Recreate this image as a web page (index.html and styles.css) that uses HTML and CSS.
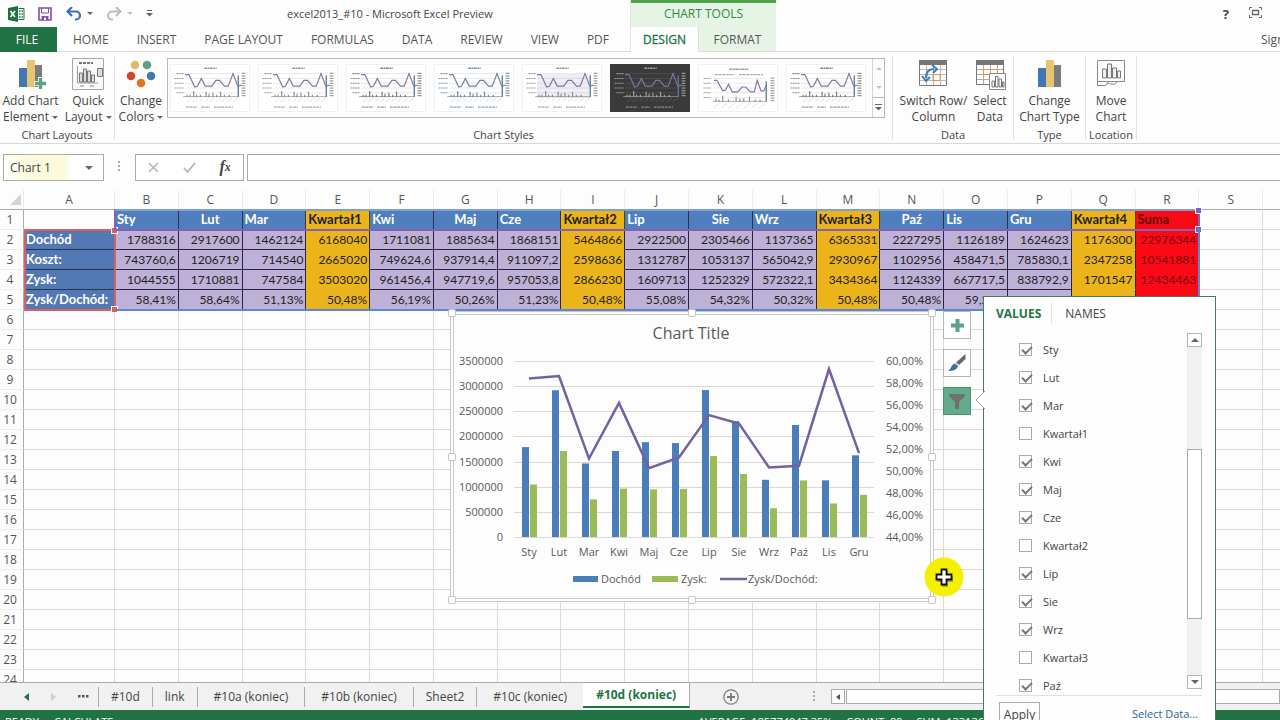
FILE: index.html
```
<!DOCTYPE html>
<html lang="en">
<head>
    <meta charset="UTF-8">
    <meta name="viewport" content="width=device-width, initial-scale=1.0">
    <title>excel2013_#10 - Microsoft Excel Preview</title>
    <link rel="stylesheet" href="styles.css">
</head>
<body>
    <svg class="defs" width="0" height="0" aria-hidden="true">
        <!-- small chart preview used in the styles gallery -->
        <symbol id="thumb" viewBox="0 0 80 48">
            <path d="M34 3.500h13" stroke="currentColor" stroke-width="1.600" stroke-dasharray="3 .6 2 .5" opacity=".6"/>
            <path d="M14 9h54M14 14h54M14 19h54M14 24h54M14 29h54" stroke="currentColor" stroke-width=".5" opacity=".25"/>
            <path d="M5 9h8M3 14h10M3 19h10M3 24h10M5 29h8" stroke="currentColor" stroke-width="1.100" stroke-dasharray="2 .5" opacity=".55"/>
            <path d="M75 8v26" stroke="currentColor" stroke-width="4" stroke-dasharray="1.300 1.300" opacity=".55"/>
            <path d="M12 33h58" stroke="currentColor" stroke-width=".8" opacity=".6"/>
            <path d="M16 33v-2M19 33v-2M23 33v-6M26 33v-2M30 33v-2M36 33v-5M39 33v-3M43 33v-4M47 33v-2M51 33v-5M55 33v-2M60 33v-2" stroke="currentColor" stroke-width="1.200" opacity=".65"/>
            <path d="M69.500 33V11" stroke="#5a7f96" stroke-width="1.400"/>
            <path d="M14 10h4l6 13 3-1 4-8 4 8h7l4-6 4 0 5 6h4l5-13 5 13 4-1" fill="none" stroke="#7b77a6" stroke-width="1.200"/>
            <path d="M16 38l5-3M22 38l5-3M28 38l5-3M34 38l5-3M40 38l5-3M46 38l5-3M52 38l5-3M58 38l5-3M64 38l5-3" stroke="currentColor" stroke-width=".7" stroke-dasharray="1 .8" opacity=".4"/>
            <path d="M15 44h12M31 44h9M44 44h20" stroke="currentColor" stroke-width="1.200" stroke-dasharray="3 .8" opacity=".5"/>
        </symbol>
        <symbol id="thumb-top" viewBox="0 0 80 48">
            <path d="M31 4.500h20" stroke="currentColor" stroke-width="1.600" stroke-dasharray="3 .6 2 .5" opacity=".6"/>
            <path d="M16 10h20M41 10h25" stroke="currentColor" stroke-width="1.200" stroke-dasharray="3 .8" opacity=".5"/>
            <path d="M14 14h54M14 19h54M14 24h54M14 29h54M14 34h54" stroke="currentColor" stroke-width=".5" opacity=".25"/>
            <path d="M4 14h8M4 19h8M4 24h8M4 29h8M4 34h8" stroke="currentColor" stroke-width="1.100" stroke-dasharray="2 .5" opacity=".55"/>
            <path d="M76 13v26" stroke="currentColor" stroke-width="4" stroke-dasharray="1.300 1.300" opacity=".55"/>
            <path d="M14 38h56" stroke="currentColor" stroke-width=".8" opacity=".6"/>
            <path d="M17 38v-3M20 38v-2M24 38v-6M30 38v-2M38 38v-5M42 38v-3M46 38v-3M52 38v-5M58 38v-2M63 38v-2" stroke="currentColor" stroke-width="1.200" opacity=".65"/>
            <path d="M69.500 38V17" stroke="#5a7f96" stroke-width="1.400"/>
            <path d="M15 16h3l6 11 3-1 3-6 4 8h6l4-5 4 0 5 5h4l3-12 4 11 3 0 3-7" fill="none" stroke="#7b77a6" stroke-width="1.200"/>
            <path d="M14 45l7-5M22 45l7-5M30 45l7-5M38 45l7-5M46 45l7-5M54 45l7-5M62 45l7-5" stroke="currentColor" stroke-width=".7" stroke-dasharray="1 .8" opacity=".4"/>
        </symbol>
        <symbol id="columns" viewBox="0 0 32 32">
            <path d="M4 10h8v19H4z" fill="#4277b4"/>
            <path d="M12 2h8v27h-8z" fill="#e8c46f"/>
            <path d="M20 7h7v22h-7z" fill="#7b7b7b"/>
        </symbol>
    </svg>

    <div class="app">
        <header class="top">
            <div class="top-main">
                <div class="titlebar">
                    <svg width="17" height="16" viewBox="0 0 17 16"><path d="M0 2l10-2v16L0 14z" fill="#1e7145"/><path d="M10.500 2.500H16v11h-5.500" fill="#fff" stroke="#1e7145"/><path d="M11 5h1.500M13.500 5H15M11 8h1.500M13.500 8H15M11 11h1.500M13.500 11H15" stroke="#1e7145" stroke-width="1.600"/><path d="M2.500 5l4.500 6M7 5l-4.500 6" stroke="#fff" stroke-width="1.600"/></svg>
                    <button class="qa save" aria-label="Save"><svg width="14" height="14" viewBox="0 0 14 14"><path d="M1 1h12v12H1z" fill="none" stroke="#7f4fa5" stroke-width="1.600"/><path d="M3.500 1v5h7V1" fill="none" stroke="#7f4fa5"/><path d="M3.500 9h7v4h-7z" fill="#7f4fa5"/><path d="M6 10.500h2V13H6z" fill="#fff"/></svg></button>
                    <button class="qa undo" aria-label="Undo"><svg width="16" height="14" viewBox="0 0 16 14"><path d="M2 4.500h8a4 4 0 0 1 0 8H9" fill="none" stroke="#3e6db5" stroke-width="2.200"/><path d="M6 0L1.500 4.500 6 9" fill="none" stroke="#3e6db5" stroke-width="2.200"/></svg><i class="caret"></i></button>
                    <button class="qa redo" aria-label="Redo"><svg width="16" height="14" viewBox="0 0 16 14"><path d="M14 4.500H6a4 4 0 0 0 0 8h1" fill="none" stroke="#bdbdbd" stroke-width="2"/><path d="M10 0l4.500 4.500L10 9" fill="none" stroke="#bdbdbd" stroke-width="2"/></svg><i class="caret light"></i></button>
                    <button class="qa more" aria-label="Customize Quick Access Toolbar"><svg width="7" height="7" viewBox="0 0 7 7"><path d="M1 .5h5" stroke="#666"/><path d="M0 3h7L3.500 6.500z" fill="#666"/></svg></button>
                    <div class="title">excel2013_#10 - Microsoft Excel Preview</div>
                </div>
                <nav class="tabs">
                    <button class="tab file">FILE</button>
                    <button class="tab">HOME</button>
                    <button class="tab">INSERT</button>
                    <button class="tab">PAGE LAYOUT</button>
                    <button class="tab">FORMULAS</button>
                    <button class="tab">DATA</button>
                    <button class="tab">REVIEW</button>
                    <button class="tab">VIEW</button>
                    <button class="tab">PDF</button>
                </nav>
            </div>
            <div class="context">
                <div class="context-title">CHART TOOLS</div>
                <nav class="context-tabs">
                    <button class="tab active">DESIGN</button>
                    <button class="tab">FORMAT</button>
                </nav>
            </div>
            <div class="top-right">
                <div class="window-buttons">
                    <button class="help" aria-label="Help">?</button>
                    <button aria-label="Ribbon display options"><svg width="13" height="11" viewBox="0 0 13 11"><path d="M.5 3V.5H3M10 .5h2.500V3M12.500 8v2.500H10M3 10.500H.5V8" fill="none" stroke="#666"/><path d="M3.500 3.500h6v4h-6z" fill="none" stroke="#666" stroke-width="1.300"/></svg></button>
                    <button aria-label="Minimize"><svg width="9" height="11" viewBox="0 0 9 11"><path d="M0 7h9" stroke="#666" stroke-width="2"/></svg></button>
                </div>
                <a class="signin" href="#">Sign in</a>
            </div>
        </header>

        <section class="ribbon">
            <div class="group layouts">
                <div class="group-body">
                    <button class="big"><svg width="32" height="32" viewBox="0 0 32 32"><use href="#columns"/><path d="M19 25.500h13M25.500 19v13" stroke="#fff" stroke-width="5"/><path d="M20 25.500h11M25.500 20v11" stroke="#5da287" stroke-width="3.400"/></svg><span>Add Chart<br>Element <i class="caret"></i></span></button>
                    <button class="big"><svg width="32" height="32" viewBox="0 0 32 32"><path d="M.5.500h31v31H.5z" fill="#fafafa" stroke="#a6a6a6"/><path d="M7 5h14" stroke="#777" stroke-width="2" stroke-dasharray="3 1"/><path d="M5.500 8v17H26" fill="none" stroke="#999"/><path d="M7.500 15h3v9h-3zM11.500 11h3v13h-3zM15.500 13h3v11h-3zM19.500 17h3v7h-3zM25.500 10.500h5v8h-5z" fill="#ddd" stroke="#777"/><path d="M8 28h4M18 28h4" stroke="#888"/></svg><span>Quick<br>Layout <i class="caret"></i></span></button>
                </div>
                <div class="group-name">Chart Layouts</div>
            </div>
            <div class="group styles">
                <div class="group-body">
                    <button class="big"><svg width="32" height="32" viewBox="0 0 32 32"><circle cx="10" cy="7" r="4.300" fill="#e3ba6c"/><circle cx="22" cy="7" r="4.300" fill="#5da287"/><circle cx="6" cy="18" r="4.300" fill="#d1492e"/><circle cx="26" cy="18" r="4.300" fill="#4277b4"/><circle cx="16" cy="25" r="4.300" fill="#e0731f"/></svg><span>Change<br>Colors <i class="caret"></i></span></button>
                    <div class="gallery">
                        <button class="thumb" aria-label="Style 1"><svg><use href="#thumb"/></svg></button>
                        <button class="thumb" aria-label="Style 2"><svg><use href="#thumb"/></svg></button>
                        <button class="thumb strong" aria-label="Style 3"><svg><use href="#thumb"/></svg></button>
                        <button class="thumb blue" aria-label="Style 4"><svg><use href="#thumb"/></svg></button>
                        <button class="thumb shaded" aria-label="Style 5"><svg><path d="M14 9h54v24H14z" fill="#eeeef4"/><use href="#thumb"/></svg></button>
                        <button class="thumb dark" aria-label="Style 6"><svg><use href="#thumb"/></svg></button>
                        <button class="thumb" aria-label="Style 7"><svg><use href="#thumb-top"/></svg></button>
                        <button class="thumb strong" aria-label="Style 8"><svg><use href="#thumb"/></svg></button>
                        <div class="gallery-nav">
                            <button aria-label="Previous row"><i class="caret up light"></i></button>
                            <button aria-label="Next row"><i class="caret light"></i></button>
                            <button aria-label="More styles"><svg width="7" height="7" viewBox="0 0 7 7"><path d="M0 .5h7" stroke="#666"/><path d="M0 3h7L3.500 6.500z" fill="#666"/></svg></button>
                        </div>
                    </div>
                </div>
                <div class="group-name">Chart Styles</div>
            </div>
            <div class="group data">
                <div class="group-body">
                    <button class="big"><svg width="32" height="32" viewBox="0 0 32 32"><path d="M2.500 4v23.500h27V4" fill="#fff" stroke="#777"/><path d="M3 11.500h26M3 16.500h26M3 22.500h26M9.500 7v20M16.500 7v20M23.500 7v20" stroke="#c4b8ad"/><path d="M16 16.500h7v6h-7z" fill="none" stroke="#e58e45"/><path d="M2 2h28v5H2z" fill="#777"/><path d="M9 20C9 13 13 11 17 11" fill="none" stroke="#3c7fb5" stroke-width="2.200"/><path d="M5 18l4 5 4-4M15 7l5 4-4 4" fill="none" stroke="#3c7fb5" stroke-width="2"/></svg><span>Switch Row/<br>Column</span></button>
                    <button class="big"><svg width="32" height="32" viewBox="0 0 32 32"><path d="M2.500 4v22.500h27V4" fill="#fff" stroke="#777"/><path d="M3 11.500h26M3 16.500h26M3 21.500h26M9.500 7v19M16.500 7v19M23.500 7v19" stroke="#b8a99c"/><path d="M9.500 11.500h14v5h-14z" fill="none" stroke="#e58e45"/><path d="M2 2h28v5H2z" fill="#777"/><path d="M15.500 15.500h16v16h-16z" fill="#fff" stroke="#888"/><path d="M18 23h2.500v6H18zM21.500 18.500H24V29h-2.500zM25 21h2.500v8H25zM28.500 24H30v5h-1.500z" fill="none" stroke="#777"/></svg><span>Select<br>Data</span></button>
                </div>
                <div class="group-name">Data</div>
            </div>
            <div class="group type">
                <div class="group-body">
                    <button class="big"><svg width="32" height="32" viewBox="0 0 32 32"><use href="#columns"/></svg><span>Change<br>Chart Type</span></button>
                </div>
                <div class="group-name">Type</div>
            </div>
            <div class="group location">
                <div class="group-body">
                    <button class="big"><svg width="32" height="32" viewBox="0 0 32 32"><path d="M2.500 2.500h27v21h-27z" fill="#fff" stroke="#888"/><path d="M2.500 23v4.500h8l3-4h8M12 26c3-2 7 3 10-2" fill="none" stroke="#888"/><path d="M7.500 11h4v9h-4zM12.500 6h4v14h-4zM17.500 10h4v10h-4zM22.500 13h3v7h-3z" fill="#eee" stroke="#777"/></svg><span>Move<br>Chart</span></button>
                </div>
                <div class="group-name">Location</div>
            </div>
        </section>

        <section class="formula-bar">
            <div class="name-box">
                <input type="text" value="Chart 1" aria-label="Name Box">
                <button aria-label="Name list"><i class="caret big-caret"></i></button>
            </div>
            <div class="grip"></div>
            <div class="formula-buttons">
                <button aria-label="Cancel"><svg width="11" height="11" viewBox="0 0 11 11"><path d="M1 1l9 9M10 1l-9 9" stroke="#b5b5b5" stroke-width="1.500"/></svg></button>
                <button aria-label="Enter"><svg width="13" height="11" viewBox="0 0 13 11"><path d="M1 6l3.500 4L12 1" fill="none" stroke="#b5b5b5" stroke-width="1.800"/></svg></button>
                <button class="fx" aria-label="Insert Function">f<small>x</small></button>
            </div>
            <input class="formula" type="text" aria-label="Formula Bar">
        </section>

        <main class="sheet">
            <div class="cells">
                <table id="grid"></table>
                <div class="range names"></div>
                <div class="range series"></div>
                <div class="range values"></div>
            </div>

            <div class="chart" id="chart">
                <i class="handle tl"></i><i class="handle tc"></i><i class="handle tr"></i>
                <i class="handle ml"></i><i class="handle mr"></i>
                <i class="handle bl"></i><i class="handle bc"></i><i class="handle br"></i>
            </div>

            <div class="chart-buttons">
                <button aria-label="Chart Elements"><svg width="15" height="15" viewBox="0 0 15 15"><path d="M1 7.500h13M7.500 1v13" stroke="#5da287" stroke-width="4"/></svg></button>
                <button aria-label="Chart Styles"><svg width="20" height="20" viewBox="0 0 20 20"><path d="M18.500 1v5L12 12 9 9.500z" fill="#666"/><path d="M8.500 10l3 2.500" stroke="#ccc" stroke-width="2"/><path d="M7.500 10.500L11 13c-1 4-5 5-10 5 3-1 3-6 6.500-7.500z" fill="#3a6ea5"/></svg></button>
                <button class="on" aria-label="Chart Filters"><svg width="18" height="17" viewBox="0 0 18 17"><path d="M1 1h16v2l-6 6v7H7V9L1 3z" fill="#707070"/></svg></button>
            </div>

            <svg class="pointer" width="40" height="40" viewBox="0 0 40 40"><circle cx="20" cy="20" r="19.500" fill="#f5f000"/><path d="M18 14h6v5h5v6h-5v5h-6v-5h-5v-6h5z" fill="#777" opacity=".6"/><path d="M17.500 12.500h5v5h5v5h-5v5h-5v-5h-5v-5h5z" fill="#fff" stroke="#111" stroke-width="1.800"/></svg>

            <aside class="filter">
                <svg class="filter-arrow" width="10" height="18" viewBox="0 0 10 18"><path d="M10 0L1 9l9 9" fill="#fff" stroke="#999"/></svg>
                <div class="filter-tabs">
                    <button class="active">VALUES</button>
                    <button>NAMES</button>
                </div>
                <div class="filter-body">
                    <div class="filter-list" id="filterList"></div>
                    <div class="scroll">
                        <button aria-label="Scroll up"><i class="caret up big-caret"></i></button>
                        <div class="track"><div class="knob"></div></div>
                        <button aria-label="Scroll down"><i class="caret big-caret"></i></button>
                    </div>
                </div>
                <div class="filter-foot">
                    <button class="apply">Apply</button>
                    <a href="#">Select Data...</a>
                </div>
            </aside>
        </main>

        <nav class="sheet-tabs">
            <div class="sheet-nav">
                <button aria-label="Previous sheet"><svg width="5" height="8" viewBox="0 0 5 8"><path d="M5 0v8L0 4z" fill="#217346"/></svg></button>
                <button aria-label="Next sheet"><svg width="5" height="8" viewBox="0 0 5 8"><path d="M0 0v8l5-4z" fill="#d0d0d0"/></svg></button>
                <button aria-label="More sheets"><svg width="11" height="3" viewBox="0 0 11 3"><path d="M0 0h2.500v2.500H0zM4 0h2.500v2.500H4zM8 0h2.500v2.500H8z" fill="#555"/></svg></button>
            </div>
            <button class="sheet-tab">#10d</button>
            <button class="sheet-tab">link</button>
            <button class="sheet-tab long">#10a (koniec)</button>
            <button class="sheet-tab long">#10b (koniec)</button>
            <button class="sheet-tab">Sheet2</button>
            <button class="sheet-tab long">#10c (koniec)</button>
            <button class="sheet-tab long active">#10d (koniec)</button>
            <button class="add" aria-label="New sheet"><svg width="16" height="16" viewBox="0 0 16 16"><circle cx="8" cy="8" r="7.200" fill="none" stroke="#777" stroke-width="1.200"/><path d="M4 8h8M8 4v8" stroke="#777" stroke-width="1.800"/></svg></button>
            <div class="grip"></div>
            <div class="hscroll">
                <button aria-label="Scroll left"><svg width="4" height="6" viewBox="0 0 4 6"><path d="M4 0v6L0 3z" fill="#555"/></svg></button>
                <div class="hknob"></div>
            </div>
        </nav>

        <footer class="status">
            <span>READY</span>
            <span>CALCULATE</span>
            <div class="summary">
                <span>AVERAGE: 185774047,35%</span>
                <span>COUNT: 89</span>
                <span>SUM: 133136</span>
            </div>
        </footer>
    </div>

    <script src="script.js"></script>
</body>
</html>
```
FILE: styles.css
```
* {
    box-sizing: border-box;
}
body {
    margin: 0;
    overflow: hidden;
    font-family: "Open Sans", "Noto Sans", sans-serif;
    font-size: 12px;
    color: #444;
    background-color: #fdfdfd;
}
button {
    font: inherit;
    color: inherit;
    background: none;
    border: 0;
    padding: 0;
}
input {
    font: inherit;
    color: inherit;
}
svg {
    flex: none;
}
.defs {
    position: absolute;
}
/* the status bar runs a little below the window edge */
.app {
    display: flex;
    flex-direction: column;
    height: calc(100vh + 12px);
}
.caret {
    display: inline-block;
    border: 3px solid transparent;
    border-top-color: #666;
    border-bottom: 0;
    vertical-align: middle;
}
.caret.up {
    border-top: 0;
    border-bottom: 3px solid #666;
}
.caret.big-caret {
    border-left-width: 4px;
    border-right-width: 4px;
    border-top-width: 4px;
}
.caret.up.big-caret {
    border-top-width: 0;
    border-bottom-width: 4px;
}
.caret.light {
    border-top-color: #c4c4c4;
}
.caret.up.light {
    border-bottom-color: #c4c4c4;
}

/* title bar and tabs */
.top {
    display: flex;
    flex: none;
    height: 52px;
}
.top-main {
    width: 631px;
    flex: none;
    border-right: 1px solid #e4e4e4;
}
.titlebar {
    display: flex;
    align-items: center;
    height: 27px;
    padding-left: 8px;
}
.qa {
    display: flex;
    align-items: center;
    gap: 5px;
}
.qa.save {
    margin-left: 13px;
}
.qa.undo {
    margin-left: 14px;
}
.qa.redo {
    margin-left: 13px;
}
.qa.more {
    margin-left: 13px;
}
.title {
    flex: 1;
    padding-left: 134px;
    font-size: 11px;
    white-space: nowrap;
}
.tabs,
.context-tabs {
    display: flex;
    height: 25px;
    border-bottom: 1px solid #dcdcdc;
}
.tab {
    padding: 0 14px;
    font-size: 12px;
    color: #555;
    white-space: nowrap;
}
.tab.file {
    flex: none;
    width: 57px;
    height: 25px;
    padding: 0 3px 0 0;
    margin-right: 2px;
    color: #fff;
    background-color: #217346;
}
.context {
    width: 145px;
    flex: none;
    background-color: #e6f4e6;
    border-top: 3px solid #4ea44c;
}
.context-title {
    height: 24px;
    line-height: 22px;
    text-align: center;
    color: #2e8b3c;
}
.context-tabs .tab {
    flex: 1;
}
.context-tabs .tab.active {
    flex: none;
    width: 68px;
    height: 25px;
    padding: 0;
    background-color: #fdfdfd;
    color: #217346;
    border-right: 1px solid #dcdcdc;
    -webkit-text-stroke: 0.3px #217346;
}
.top-right {
    flex: 1;
    overflow: hidden;
    border-bottom: 1px solid #dcdcdc;
}
.window-buttons {
    display: flex;
    justify-content: flex-end;
    align-items: center;
    gap: 20px;
    height: 27px;
    margin-right: -11px;
}
.help {
    font-size: 13px;
    font-weight: bold;
}
.signin {
    display: block;
    margin-right: -18px;
    line-height: 25px;
    text-align: right;
    color: #555;
    text-decoration: none;
}

/* ribbon */
.ribbon {
    display: flex;
    flex: none;
    height: 92px;
    padding-top: 4px;
    border-bottom: 1px solid #d8d8d8;
}
.group {
    display: flex;
    flex-direction: column;
    flex: none;
    height: 84px;
    border-right: 1px solid #e1e1e1;
}
.group-body {
    display: flex;
    justify-content: center;
    height: 72px;
}
.group-name {
    line-height: 20px;
    font-size: 11px;
    text-align: center;
}
.layouts {
    width: 115px;
}
.styles {
    width: 778px;
}
.data {
    width: 121px;
}
.type {
    width: 72px;
}
.location {
    width: 51px;
}
.big {
    display: flex;
    flex-direction: column;
    align-items: center;
    justify-content: flex-start;
    padding: 2px 3px 0;
    line-height: 16px;
    white-space: nowrap;
}
.big span {
    padding-top: 3px;
}
.styles .group-body {
    justify-content: flex-start;
}
.styles .big {
    width: 52px;
}
.gallery {
    display: flex;
    flex: 1;
    gap: 8px;
    height: 60px;
    margin: 2px 7px 0 0;
    padding-left: 2px;
    border: 1px solid #b8b8b8;
}
.thumb {
    width: 80px;
    height: 48px;
    margin-top: 5px;
    color: #555;
    background-color: #fff;
    border: 1px solid #f0f0f0;
}
.thumb svg {
    display: block;
    width: 100%;
    height: 100%;
}
.thumb.strong {
    color: #333;
}
.thumb.blue {
    color: #26496e;
}
.thumb.dark {
    color: #ddd;
    background-color: #3a3a3a;
    border-color: #3a3a3a;
}
.gallery-nav {
    display: flex;
    flex-direction: column;
    flex: 1;
    margin-left: -2px;
    border-left: 1px solid #d4d4d4;
}
.gallery-nav button {
    display: flex;
    align-items: center;
    justify-content: center;
    flex: 1;
}
.gallery-nav button:last-child {
    border-top: 1px solid #b8b8b8;
}

/* formula bar */
.formula-bar {
    display: flex;
    align-items: center;
    flex: none;
    height: 46px;
    padding-left: 3px;
}
.name-box,
.formula-buttons,
.formula {
    height: 27px;
    background-color: #fff;
    border: 1px solid #ababab;
}
.name-box {
    display: flex;
    width: 101px;
    background-image: linear-gradient(to right, #fff, #fbfbdc 20%, #fbfbdc 60%, #fff 70%);
}
.name-box input {
    width: 70px;
    padding: 0 6px;
    border: 0;
    background: none;
    font-size: 12px;
}
.name-box button {
    flex: 1;
}
.grip {
    width: 2px;
    height: 12px;
    background-image: linear-gradient(#aaa 50%, transparent 50%);
    background-size: 2px 4px;
}
.formula-bar .grip {
    margin: 0 15px 0 14px;
}
.formula-buttons {
    display: flex;
    width: 109px;
    margin-right: 3px;
}
.formula-buttons button {
    display: flex;
    align-items: center;
    justify-content: center;
    flex: 1;
}
.fx {
    font-family: "Liberation Serif", serif;
    font-size: 16px;
    font-style: italic;
    font-weight: bold;
}
.fx small {
    font-size: 12px;
}
.formula {
    flex: 1;
    min-width: 0;
    border-right: 0;
}

/* worksheet */
.sheet {
    position: relative;
    flex: 1;
    min-height: 0;
}
.cells {
    position: relative;
    height: 100%;
    overflow: hidden;
    border-bottom: 1px solid #ababab;
}
#grid {
    width: 1327px;
    table-layout: fixed;
    border-collapse: separate;
    border-spacing: 0;
    font-family: "Lato", sans-serif;
    color: #222;
}
#grid th,
#grid td {
    height: 20px;
    padding: 0 2px;
    line-height: 19px;
    white-space: nowrap;
    border-right: 1px solid #dadada;
    border-bottom: 1px solid #dadada;
}
#grid th {
    padding: 0;
    font-family: "Open Sans", sans-serif;
    font-weight: normal;
    color: #555;
}
#grid thead th {
    border-bottom-color: #ababab;
    border-right-color: #ececec;
}
#grid tbody th {
    padding-right: 3px;
    border-right-color: #ababab;
    border-bottom-color: #ececec;
}
.col-head {
    width: 24px;
}
.col-a {
    width: 91px;
}
#grid td.num {
    text-align: right;
    background-color: #beb1d8;
    border-color: #2b2440;
}
#grid td.month,
#grid td.label {
    font-size: 13px;
    font-weight: bold;
    color: #fff;
    background-color: #4f7fbe;
    border-color: #26344f;
}
#grid td.label {
    background-color: #5379b5;
}
#grid td.mid {
    text-align: center;
}
#grid td.quarter {
    background-color: #ebb41a;
    border-bottom-color: #ebb41a;
}
#grid td.sum {
    color: #7c0710;
    background-color: #fa0a16;
    border-color: #fa0a16;
}
#grid td.quarter-head,
#grid td.sum-head {
    font-size: 13px;
    font-weight: bold;
    background-color: #ebb41a;
    border-color: #5c4300;
}
#grid td.sum-head {
    color: #5c0308;
    background-color: #fa0a16;
}
.corner {
    display: block;
    width: 0;
    margin-left: 10px;
    border-left: 11px solid transparent;
    border-bottom: 11px solid #d5d5d5;
}
/* coloured outlines of the ranges that feed the chart */
.range {
    position: absolute;
    border: 2px solid;
}
.range.names {
    left: 24px;
    top: 39px;
    width: 92px;
    height: 82px;
    border-color: #d9605f;
}
.range.series {
    left: 114px;
    top: 19px;
    width: 1086px;
    height: 22px;
    border-color: #8a5fb0;
    border-top-color: #7f9fd4;
}
.range.values {
    left: 115px;
    top: 39px;
    width: 1085px;
    height: 82px;
    border-color: #5b86d0;
    border-top: 0;
    border-left: 0;
}
.range.names::before,
.range.names::after,
.range.series::before,
.range.series::after {
    content: "";
    position: absolute;
    right: -3px;
    width: 5px;
    height: 5px;
    background-color: #d9605f;
    outline: 1px solid #fff;
}
.range::before {
    top: -3px;
}
.range::after {
    bottom: -3px;
}
.range.series::before,
.range.series::after {
    background-color: #7a62c0;
}

/* chart */
.chart {
    position: absolute;
    left: 450px;
    top: 121px;
    width: 484px;
    height: 291px;
    background-color: #fdfdfd;
    border: 4px double #c9c9c9;
}
.chart svg {
    display: block;
    font-size: 11px;
}
.handle {
    position: absolute;
    width: 8px;
    height: 8px;
    background-color: #fff;
    border: 1px solid #c4c4c4;
    border-radius: 2px;
}
.handle.tl, .handle.tc, .handle.tr { top: -6px; }
.handle.bl, .handle.bc, .handle.br { bottom: -6px; }
.handle.tl, .handle.ml, .handle.bl { left: -6px; }
.handle.tr, .handle.mr, .handle.br { right: -6px; }
.handle.tc, .handle.bc { left: calc(50% - 4px); }
.handle.ml, .handle.mr { top: calc(50% - 4px); }
.chart-buttons {
    position: absolute;
    left: 943px;
    top: 121px;
    display: flex;
    flex-direction: column;
    gap: 10px;
}
.chart-buttons button {
    display: flex;
    align-items: center;
    justify-content: center;
    width: 28px;
    height: 28px;
    background-color: #fff;
    border: 1px solid #b5b5b5;
}
.chart-buttons .on {
    background-color: #63ac8b;
    border-color: #4b9172;
}
.pointer {
    position: absolute;
    left: 924px;
    top: 367px;
}

/* chart filter panel */
.filter {
    position: absolute;
    left: 983px;
    top: 106px;
    z-index: 2;
    width: 233px;
    height: 440px;
    background-color: #fdfdfd;
    border: 1px solid #3f7d62;
}
.filter-arrow {
    position: absolute;
    left: -9px;
    top: 94px;
}
.filter-tabs {
    display: flex;
    height: 36px;
    padding: 6px 0 0 12px;
}
.filter-tabs button {
    height: 20px;
    padding-left: 13px;
}
.filter-tabs .active {
    padding: 0 10px 0 0;
    font-weight: bold;
    color: #217346;
    border-right: 1px solid #e1e1e1;
}
.filter-body {
    display: flex;
    justify-content: space-between;
    height: 363px;
    margin: 0 13px 0 12px;
    border-bottom: 1px solid #e1e1e1;
}
.filter-list {
    padding-top: 2px;
}
.filter-list label {
    display: flex;
    align-items: center;
    gap: 11px;
    height: 28px;
    padding-left: 23px;
    font-size: 11px;
}
.filter-list input {
    appearance: none;
    width: 13px;
    height: 13px;
    margin: 0;
    background-color: #fff;
    border: 1px solid #ababab;
}
.filter-list input:checked::before {
    content: "";
    display: block;
    width: 8px;
    height: 4px;
    margin: 2px 0 0 2px;
    border: solid #777;
    border-width: 0 0 2px 2px;
    transform: rotate(-45deg);
}
.scroll {
    display: flex;
    flex-direction: column;
    width: 15px;
    height: 356px;
    background-color: #f1f1f1;
}
.scroll button {
    display: flex;
    align-items: center;
    justify-content: center;
    height: 14px;
    background-color: #fff;
    border: 1px solid #b5b5b5;
}
.track {
    flex: 1;
    padding-top: 102px;
}
.knob {
    height: 170px;
    background-color: #fff;
    border: 1px solid #ababab;
}
.filter-foot {
    display: flex;
    justify-content: space-between;
    align-items: flex-start;
    padding: 6px 17px 0 15px;
}
.apply {
    width: 41px;
    height: 24px;
    border: 1px solid #ababab;
}
.filter-foot a {
    line-height: 24px;
    font-size: 11px;
    color: #2a6496;
    text-decoration: none;
}

/* sheet tabs */
.sheet-tabs {
    display: flex;
    align-items: center;
    flex: none;
    height: 27px;
    background-color: #f1f1f1;
}
.sheet-nav {
    display: flex;
    align-items: center;
    justify-content: space-between;
    width: 99px;
    height: 20px;
    padding: 0 9px 0 24px;
    border-right: 1px solid #ababab;
}
.sheet-nav button {
    display: flex;
}
.sheet-tab {
    height: 20px;
    padding: 0 12px;
    border-right: 1px solid #ababab;
    white-space: nowrap;
}
.sheet-tab.long {
    padding: 0 16px;
}
.sheet-tab.active {
    align-self: flex-start;
    height: 25px;
    padding: 0 13px;
    margin-left: -1px;
    font-weight: bold;
    color: #217346;
    background-color: #fff;
    border-bottom: 2px solid #217346;
}
.add {
    display: flex;
    margin-left: 33px;
}
.sheet-tabs .grip {
    margin: 0 16px 0 74px;
}
.hscroll {
    display: flex;
    flex: 1;
    height: 15px;
}
.hscroll button {
    display: flex;
    align-items: center;
    justify-content: center;
    width: 14px;
    background-color: #fff;
    border: 1px solid #ababab;
}
.hknob {
    flex: 1;
    margin-left: 1px;
    background-color: #fff;
    border: 1px solid #ababab;
}

/* status bar */
.status {
    display: flex;
    align-items: center;
    gap: 15px;
    flex: none;
    height: 22px;
    padding-left: 5px;
    font-size: 11px;
    color: #fff;
    background-color: #217346;
}
.summary {
    display: flex;
    gap: 14px;
    flex: 0 1 582px;
    margin-left: auto;
    white-space: nowrap;
}
```
FILE: script.js
```
const months = ['Sty', 'Lut', 'Mar', 'Kwartał1', 'Kwi', 'Maj', 'Cze', 'Kwartał2', 'Lip', 'Sie', 'Wrz', 'Kwartał3', 'Paź', 'Lis', 'Gru', 'Kwartał4', 'Suma'];
const centered = ['Lut', 'Maj', 'Sie', 'Paź'];
const rows = [
    ['Dochód', '1788316', '2917600', '1462124', '6168040', '1711081', '1885634', '1868151', '5464866', '2922500', '2305466', '1137365', '6365331', '2227295', '1126189', '1624623', '1176300', '22976344'],
    ['Koszt:', '743760,6', '1206719', '714540', '2665020', '749624,6', '937914,4', '911097,2', '2598636', '1312787', '1053137', '565042,9', '2930967', '1102956', '458471,5', '785830,1', '2347258', '10541881'],
    ['Zysk:', '1044555', '1710881', '747584', '3503020', '961456,4', '947719,6', '957053,8', '2866230', '1609713', '1252329', '572322,1', '3434364', '1124339', '667717,5', '838792,9', '1701547', '12434463'],
    ['Zysk/Dochód:', '58,41%', '58,64%', '51,13%', '50,48%', '56,19%', '50,26%', '51,23%', '50,48%', '55,08%', '54,32%', '50,32%', '50,48%', '50,48%', '59,27%', '51,63%', '50,48%', '54,12%']
];
const columns = 20;

function isQuarter(name) {
    return name.startsWith('Kwartał');
}

function cell(row, col) {
    if (row > 5 || col > months.length || (row === 1 && col === 0)) return '<td></td>';
    if (col === 0) return `<td class="label">${rows[row - 2][0]}</td>`;
    const name = months[col - 1];
    if (row === 1) {
        let cls = centered.includes(name) ? 'month mid' : 'month';
        if (isQuarter(name)) cls = 'quarter-head';
        if (name === 'Suma') cls = 'sum-head';
        return `<td class="${cls}">${name}</td>`;
    }
    let cls = 'num';
    if (isQuarter(name)) cls += ' quarter';
    if (name === 'Suma') cls += ' sum';
    return `<td class="${cls}">${rows[row - 2][col]}</td>`;
}

function drawGrid() {
    let html = '<thead><tr><th class="col-head"><i class="corner"></i></th>';
    for (let c = 0; c < columns; c++) {
        html += `<th${c === 0 ? ' class="col-a"' : ''}>${String.fromCharCode(65 + c)}</th>`;
    }
    html += '</tr></thead><tbody>';
    for (let r = 1; r <= 24; r++) {
        html += `<tr><th>${r}</th>`;
        for (let c = 0; c < columns; c++) html += cell(r, c);
        html += '</tr>';
    }
    document.getElementById('grid').innerHTML = html + '</tbody>';
}

function drawChart() {
    const left = 60, right = 420, top = 46, bottom = 222, step = 30;
    const number = text => parseFloat(text.replace(',', '.'));
    let svg = '<text x="237" y="24" font-size="16" text-anchor="middle" fill="#595959">Chart Title</text>';

    for (let i = 0; i <= 7; i++) {
        const y = Math.round(bottom - i * (bottom - top) / 7);
        svg += `<path d="M${left} ${y + 0.5}H${right}" stroke="#d9d9d9"/>`;
        svg += `<text x="49" y="${y + 4}" text-anchor="end">${i * 500000}</text>`;
    }
    for (let i = 0; i <= 8; i++) {
        const y = Math.round(bottom - i * (bottom - top) / 8);
        svg += `<text x="432" y="${y + 4}">${44 + i * 2},00%</text>`;
    }

    const points = [];
    let n = 0;
    months.forEach((name, i) => {
        if (isQuarter(name) || name === 'Suma') return;
        const x = left + n * step;
        const income = number(rows[0][i + 1]) / 3500000 * (bottom - top);
        const profit = number(rows[2][i + 1]) / 3500000 * (bottom - top);
        svg += `<rect x="${x + 8}" y="${bottom - income}" width="7" height="${income}" fill="#4a7ebb"/>`;
        svg += `<rect x="${x + 16}" y="${bottom - profit}" width="7" height="${profit}" fill="#9bbb59"/>`;
        svg += `<text x="${x + 15}" y="241" text-anchor="middle">${name}</text>`;
        points.push(`${x + 15},${bottom - (number(rows[3][i + 1]) - 44) / 16 * (bottom - top)}`);
        n++;
    });
    svg += `<polyline points="${points.join(' ')}" fill="none" stroke="#7560a0" stroke-width="2.5"/>`;

    svg += '<rect x="119" y="261" width="25" height="6" fill="#4a7ebb"/><text x="147" y="268">Dochód</text>';
    svg += '<rect x="198" y="261" width="26" height="6" fill="#9bbb59"/><text x="227" y="268">Zysk:</text>';
    svg += '<path d="M266 264h27" stroke="#7560a0" stroke-width="2.5"/><text x="294" y="268">Zysk/Dochód:</text>';

    document.getElementById('chart').insertAdjacentHTML('afterbegin',
        `<svg width="476" height="283" viewBox="0 0 476 283" fill="#595959">${svg}</svg>`);
}

function drawFilter() {
    document.getElementById('filterList').innerHTML = months.slice(0, 13).map(name =>
        `<label><input type="checkbox"${isQuarter(name) ? '' : ' checked'}>${name}</label>`
    ).join('');
}

drawGrid();
drawChart();
drawFilter();
```
